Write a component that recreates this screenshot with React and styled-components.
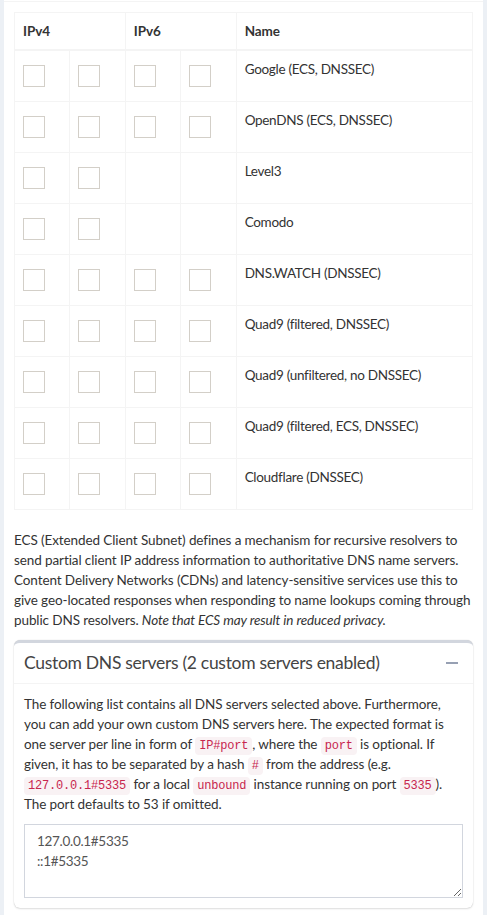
import React from 'react'
import styled, { createGlobalStyle } from 'styled-components'

const GlobalStyle = createGlobalStyle`
  html, body {
    margin: 0;
    padding: 0;
    background: #ecf0f5;
  }
  body {
    font-family: "Source Sans Pro", Lato, "Noto Sans", sans-serif;
    font-size: 13.5px;
    letter-spacing: -0.1px;
    line-height: 20px;
    color: #333;
  }
`

const servers = [
  { name: 'Google (ECS, DNSSEC)', v6: true },
  { name: 'OpenDNS (ECS, DNSSEC)', v6: true },
  { name: 'Level3', v6: false },
  { name: 'Comodo', v6: false },
  { name: 'DNS.WATCH (DNSSEC)', v6: true },
  { name: 'Quad9 (filtered, DNSSEC)', v6: true },
  { name: 'Quad9 (unfiltered, no DNSSEC)', v6: true },
  { name: 'Quad9 (filtered, ECS, DNSSEC)', v6: true },
  { name: 'Cloudflare (DNSSEC)', v6: true }
]

const Page = styled.div`
  padding: 0 4px;
`

const Box = styled.div`
  background: #fff;
  min-height: 915px;
`

const BoxTop = styled.div`
  height: 1px;
  border-bottom: 1px solid #f4f4f4;
`

const BoxBody = styled.div`
  padding: 10px;
`

const Table = styled.table`
  width: 100%;
  table-layout: fixed;
  border-collapse: collapse;
  border: 1px solid #f4f4f4;
  margin-bottom: 20px;
`

const Th = styled.th`
  text-align: left;
  font-weight: 700;
  padding: 8px;
  border: 1px solid #f4f4f4;
  border-bottom-width: 2px;
`

const Td = styled.td`
  padding: 8px;
  vertical-align: top;
  border: 1px solid #f4f4f4;
  letter-spacing: -0.3px;
`

const Check = styled.span`
  display: block;
  width: 22px;
  height: 22px;
  margin: 6px 0;
  box-sizing: border-box;
  border: 1px solid #d3cfc8;
  background: #fff;
`

const Text = styled.p`
  margin: 0 0 10px;
`

const Card = styled.div`
  border-top: 3px solid #d2d6de;
  border-radius: 6px;
  background: #fff;
  box-shadow: 0 0 1px rgba(0, 0, 0, 0.2), 0 1px 2px rgba(0, 0, 0, 0.12);
`

const CardHeader = styled.div`
  display: flex;
  align-items: center;
  justify-content: space-between;
  padding: 10px;
  border-bottom: 1px solid #f4f4f4;
`

const CardTitle = styled.h3`
  margin: 0;
  font-size: 17.5px;
  letter-spacing: -0.3px;
  line-height: 20px;
  font-weight: 400;
  color: #444;
`

const ToolButton = styled.button`
  border: 0;
  background: transparent;
  padding: 0 5px;
  display: flex;
  align-items: center;
`

const CardBody = styled.div`
  padding: 10px;
`

const Code = styled.code`
  font-family: "Liberation Mono", "DejaVu Sans Mono", monospace;
  font-size: 12px;
  line-height: 1;
  letter-spacing: -0.2px;
  color: #c7254e;
  background: #f9f2f4;
  border-radius: 4px;
  padding: 2px 4px;
`

const Area = styled.textarea`
  display: block;
  box-sizing: border-box;
  width: 100%;
  height: 74px;
  border: 1px solid #d2d6de;
  padding: 6px 12px;
  font-family: "Source Sans Pro", Lato, "Noto Sans", sans-serif;
  font-size: 13.5px;
  letter-spacing: -0.3px;
  line-height: 20px;
  color: #555;
  resize: vertical;
  outline: none;
`

export default function App() {
  return (
    <Page>
      <GlobalStyle />
      <Box>
        <BoxTop />
        <BoxBody>
          <Table>
            <colgroup>
              <col style={{ width: '12%' }} />
              <col style={{ width: '12.2%' }} />
              <col style={{ width: '12%' }} />
              <col style={{ width: '12.2%' }} />
              <col />
            </colgroup>
            <thead>
              <tr>
                <Th colSpan={2}>IPv4</Th>
                <Th colSpan={2}>IPv6</Th>
                <Th>Name</Th>
              </tr>
            </thead>
            <tbody>
              {servers.map(s => (
                <tr key={s.name}>
                  <Td><Check /></Td>
                  <Td><Check /></Td>
                  <Td>{s.v6 && <Check />}</Td>
                  <Td>{s.v6 && <Check />}</Td>
                  <Td>{s.name}</Td>
                </tr>
              ))}
            </tbody>
          </Table>
          <Text>
            ECS (Extended Client Subnet) defines a mechanism for recursive resolvers to
            send partial client IP address information to authoritative DNS name servers.
            Content Delivery Networks (CDNs) and latency-sensitive services use this to
            give geo-located responses when responding to name lookups coming through
            public DNS resolvers. <em>Note that ECS may result in reduced privacy.</em>
          </Text>
          <Card>
            <CardHeader>
              <CardTitle>Custom DNS servers (2 custom servers enabled)</CardTitle>
              <ToolButton>
                <svg width="12" height="12" viewBox="0 0 12 12">
                  <rect x="0" y="5" width="12" height="2" fill="#97a0b3" />
                </svg>
              </ToolButton>
            </CardHeader>
            <CardBody>
              <Text>
                The following list contains all DNS servers selected above. Furthermore,
                you can add your own custom DNS servers here. The expected format is
                one server per line in form of <Code>IP#port</Code>, where the <Code>port</Code> is
                optional. If given, it has to be separated by a hash <Code>#</Code> from the
                address (e.g. <Code>127.0.0.1#5335</Code> for a local <Code>unbound</Code> instance
                running on port <Code>5335</Code>). The port defaults to 53 if omitted.
              </Text>
              <Area defaultValue={'127.0.0.1#5335\n::1#5335'} />
            </CardBody>
          </Card>
        </BoxBody>
      </Box>
    </Page>
  )
}
